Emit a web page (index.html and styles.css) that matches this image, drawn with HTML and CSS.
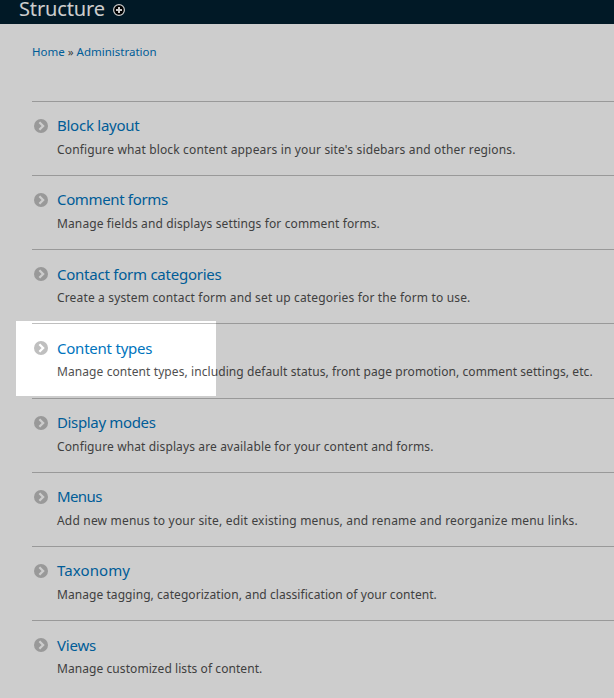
FILE: index.html
```html
<!DOCTYPE html>
<html lang="en">
<head>
<meta charset="utf-8">
<title>Structure</title>
<link rel="stylesheet" href="styles.css">
</head>
<body>
<svg class="defs" width="0" height="0">
  <symbol id="chevron" viewBox="0 0 14 14"><circle cx="7" cy="7" r="7" fill="#bfbfbf"/><path d="M5.4 3.3 9.1 7 5.4 10.7" fill="none" stroke="#fff" stroke-width="2.3"/></symbol>
</svg>
<header class="header">
  <h1>Structure</h1>
  <svg class="add" viewBox="0 0 12 12"><circle cx="6" cy="6" r="5.4" fill="#000" stroke="#fff" stroke-width="1.2"/><path d="M6 3v6M3 6h6" stroke="#fff" stroke-width="2"/></svg>
</header>
<main class="page">
  <nav class="breadcrumb"><a>Home</a><span>»</span><a>Administration</a></nav>
  <ul class="admin-list">
    <li><svg class="icon"><use href="#chevron"/></svg><div><a class="label t1">Block layout</a><p class="d1">Configure what block content appears in your site's sidebars and other regions.</p></div></li>
    <li><svg class="icon"><use href="#chevron"/></svg><div><a class="label t2">Comment forms</a><p class="d2">Manage fields and displays settings for comment forms.</p></div></li>
    <li><svg class="icon"><use href="#chevron"/></svg><div><a class="label t3">Contact form categories</a><p class="d3">Create a system contact form and set up categories for the form to use.</p></div></li>
    <li><svg class="icon"><use href="#chevron"/></svg><div><a class="label t4">Content types</a><p class="d4">Manage content types, including default status, front page promotion, comment settings, etc.</p></div></li>
    <li><svg class="icon"><use href="#chevron"/></svg><div><a class="label t5">Display modes</a><p class="d5">Configure what displays are available for your content and forms.</p></div></li>
    <li><svg class="icon"><use href="#chevron"/></svg><div><a class="label t6">Menus</a><p class="d6">Add new menus to your site, edit existing menus, and rename and reorganize menu links.</p></div></li>
    <li><svg class="icon"><use href="#chevron"/></svg><div><a class="label t7">Taxonomy</a><p class="d7">Manage tagging, categorization, and classification of your content.</p></div></li>
    <li><svg class="icon"><use href="#chevron"/></svg><div><a class="label t8">Views</a><p class="d8">Manage customized lists of content.</p></div></li>
  </ul>
</main>
<div class="spotlight"></div>
</body>
</html>
```
FILE: styles.css
```css
* { box-sizing: border-box; }
body { margin: 0; height: 698px; overflow: hidden; position: relative; background: #fff; color: #505050; font: 12px/18px "Lucida Grande", "Lucida Sans Unicode", "Noto Sans", sans-serif; white-space: nowrap; }
.defs { position: absolute; }
.header { height: 24px; padding-left: 19px; display: flex; background: #022030; color: #fff; }
h1 { margin: 0; font-size: 20px; line-height: 18px; font-weight: 400; letter-spacing: -.13px; }
.add { width: 12px; height: 12px; margin: 4px 0 0 8px; }
.page { padding: 19px 0 0 32px; }
.breadcrumb { display: flex; gap: 3px; height: 18px; font-size: 11.5px; }
a { color: #0074bd; }
.admin-list { list-style: none; margin: 39.8px 0 0; padding: 0; }
li { display: flex; height: 74.2px; border-top: 1px solid #bfbfbf; padding-top: 14px; }
.icon { width: 14px; height: 14px; margin: 3px 9px 0 2px; flex: none; }
.label { display: block; margin-top: -.5px; font-size: 15px; line-height: 20px; }
p { margin: 5.6px 0 0; font-size: 12px; line-height: 18px; }
.t1 { letter-spacing: -.25px; }
.t2 { letter-spacing: -.35px; }
.t3 { letter-spacing: -.24px; }
.t4 { letter-spacing: -.23px; }
.t5 { letter-spacing: -.35px; }
.t6 { letter-spacing: -.6px; }
.t7 { letter-spacing: .1px; }
.t8 { letter-spacing: -.2px; }
.d1 { letter-spacing: .15px; }
.d2 { letter-spacing: .12px; }
.d3 { letter-spacing: .155px; }
.d4 { letter-spacing: .085px; }
.d5 { letter-spacing: .125px; }
.d6 { letter-spacing: .185px; }
.d7 { letter-spacing: .06px; }
.d8 { letter-spacing: .07px; }
.spotlight { position: absolute; left: 16px; top: 321px; width: 200px; height: 75px; box-shadow: 0 0 0 700px rgba(0,0,0,.196); }
```
